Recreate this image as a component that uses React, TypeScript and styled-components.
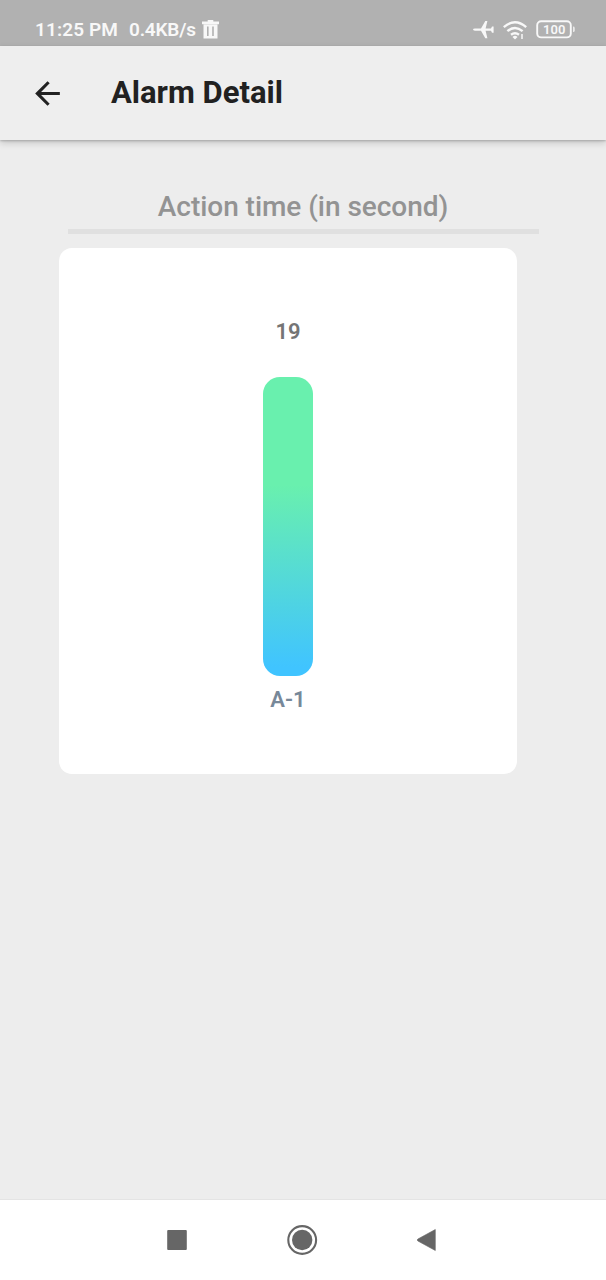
import React from "react";
import styled, { createGlobalStyle } from "styled-components";

const GlobalStyle = createGlobalStyle`
  * { box-sizing: border-box; }
  html, body { margin: 0; padding: 0; }
  body { font-family: Roboto, "Liberation Sans", sans-serif; background: #ededed; }
`;

const Screen = styled.div`
  width: 606px;
  height: 1280px;
  display: flex;
  flex-direction: column;
  background: #ededed;
  overflow: hidden;
`;

const StatusBar = styled.header`
  height: 46px;
  flex: none;
  display: flex;
  align-items: flex-start;
  justify-content: space-between;
  padding: 18px 30px 0 35px;
  background: #b1b1b1;
  color: #f8f8f8;
`;

const StatusGroup = styled.div<{ $gap: number }>`
  display: flex;
  align-items: center;
  height: 23px;
  gap: ${(p) => p.$gap}px;
`;

const StatusText = styled.span<{ $width: number; $tracking: number }>`
  width: ${(p) => p.$width}px;
  font-size: 19px;
  line-height: 23px;
  font-weight: 600;
  letter-spacing: ${(p) => p.$tracking}px;
  white-space: nowrap;
`;

const AppBar = styled.div`
  height: 94px;
  flex: none;
  display: flex;
  align-items: center;
  padding: 0 29px;
  background: #eeeeee;
  box-shadow: 0 1px 2px rgba(0, 0, 0, 0.2), 0 3px 7px rgba(0, 0, 0, 0.17);
`;

const BackButton = styled.button`
  display: flex;
  width: 82px;
  padding: 1px 0 0;
  border: 0;
  background: none;
  color: #212121;
`;

const Title = styled.h1`
  margin: 0;
  font-size: 31px;
  line-height: 36px;
  font-weight: 700;
  color: #212121;
  white-space: nowrap;
`;

const Content = styled.main`
  flex: 1;
  display: flex;
  flex-direction: column;
  padding: 47px 67px 0 59px;
`;

const SectionTitle = styled.h2`
  margin: 0 0 0 9px;
  width: 471px;
  height: 47px;
  padding: 3px 1px 0 0;
  border-bottom: 5px solid #e0e0e0;
  text-align: center;
  font-size: 28px;
  line-height: 33px;
  font-weight: 500;
  letter-spacing: -0.04px;
  color: #939393;
  white-space: nowrap;
`;

const ChartCard = styled.section`
  margin-top: 14px;
  width: 458px;
  height: 526px;
  display: flex;
  flex-direction: column;
  align-items: center;
  padding-top: 71px;
  border-radius: 13px;
  background: #ffffff;
`;

const ChartLabel = styled.span<{ $color: string }>`
  font-size: 22px;
  line-height: 26px;
  font-weight: 600;
  color: ${(p) => p.$color};
`;

const Bar = styled.div`
  width: 50px;
  height: 299px;
  margin: 32px 0 11px;
  border-radius: 17px;
  background: linear-gradient(to top, #40c4ff 0%, #40c4ff 3%, #69f0ae 64%);
`;

const NavBar = styled.nav`
  height: 81px;
  flex: none;
  display: flex;
  align-items: center;
  justify-content: space-between;
  padding: 0 168px 0 166px;
  border-top: 1px solid #e4e4e4;
  background: #ffffff;
  color: #666666;
`;

const TrashIcon = () => (
  <svg width="17" height="20" viewBox="0 0 17 20" fill="currentColor">
    <path fillRule="evenodd" d="M5.7 1.6V.1h5.6v1.5H17v2.6H0V1.6zM1.5 4h14v14.6h-14zM5 6.5v9.5h1.6V6.5zm5.2 0v9.5h1.6V6.5z" />
  </svg>
);

const PlaneIcon = () => (
  <svg width="21" height="18" viewBox="0 0 21 18" fill="currentColor">
    <path d="M0 8.6Q0 7.5 2 7.5H8L12.3 0H14.4L12.6 7.5H18L19 5.4H20.6V11.8H19L18 9.7H12.6L14.4 17.2H12.3L8 9.7H2Q0 9.7 0 8.6Z" />
  </svg>
);

const WifiIcon = () => (
  <svg width="24" height="20" viewBox="0 0 24 20" fill="none" stroke="currentColor">
    <path d="M.8 7.2Q12-2.6 23.2 7.2M4.4 11.2Q12 4.8 19.6 11.2M8 14.8Q12 11.8 16 14.8" strokeWidth="2.4" />
    <path d="M9.5 17Q12 14.5 14.5 17L12 19.5Z" fill="currentColor" stroke="none" />
    <path d="M19 14V19" strokeWidth="1.5" />
  </svg>
);

const BatteryIcon = () => (
  <svg width="40" height="19" viewBox="0 0 40 19" fill="none">
    <rect x="1.2" y="1.2" width="33.6" height="16.2" rx="4" stroke="currentColor" strokeWidth="1.9" />
    <path d="M37.2 6.5q1.4 0 1.4 1.4v2.8q0 1.4-1.4 1.4z" fill="currentColor" />
    <text x="18.2" y="13.9" textAnchor="middle" fill="currentColor" fontFamily="Roboto, sans-serif" fontSize="13" fontWeight="600">
      100
    </text>
  </svg>
);

const ArrowIcon = () => (
  <svg width="37" height="37" viewBox="0 0 24 24" fill="currentColor">
    <path d="M20 11H7.83l5.59-5.59L12 4l-8 8 8 8 1.41-1.41L7.83 13H20v-2z" />
  </svg>
);

const RecentsIcon = () => (
  <svg width="22" height="32" viewBox="0 0 22 32" fill="currentColor">
    <rect x="1.2" y="6" width="19.6" height="20" rx="1" />
  </svg>
);

const HomeIcon = () => (
  <svg width="32" height="32" viewBox="0 0 32 32">
    <circle cx="16.2" cy="16" r="13.9" fill="none" stroke="currentColor" strokeWidth="2.1" />
    <circle cx="16.2" cy="16" r="10.2" fill="currentColor" />
  </svg>
);

const NavBackIcon = () => (
  <svg width="22" height="32" viewBox="0 0 22 32" fill="currentColor">
    <path d="M19.3 5.5V26.5L1.9 17Q.5 16 1.9 15Z" stroke="currentColor" strokeWidth=".6" strokeLinejoin="round" />
  </svg>
);

const data = [{ id: "A-1", seconds: 19 }];

export default function App() {
  return (
    <Screen>
      <GlobalStyle />
      <StatusBar>
        <StatusGroup $gap={0}>
          <StatusText $width={94} $tracking={0.1}>11:25 PM</StatusText>
          <StatusText $width={73} $tracking={-0.2}>0.4KB/s</StatusText>
          <TrashIcon />
        </StatusGroup>
        <StatusGroup $gap={9}>
          <PlaneIcon />
          <WifiIcon />
          <BatteryIcon />
        </StatusGroup>
      </StatusBar>
      <AppBar>
        <BackButton aria-label="Back">
          <ArrowIcon />
        </BackButton>
        <Title>Alarm Detail</Title>
      </AppBar>
      <Content>
        <SectionTitle>Action time (in second)</SectionTitle>
        <ChartCard>
          {data.map((item) => (
            <React.Fragment key={item.id}>
              <ChartLabel $color="#757575">{item.seconds}</ChartLabel>
              <Bar />
              <ChartLabel $color="#778899">{item.id}</ChartLabel>
            </React.Fragment>
          ))}
        </ChartCard>
      </Content>
      <NavBar>
        <RecentsIcon />
        <HomeIcon />
        <NavBackIcon />
      </NavBar>
    </Screen>
  );
}
